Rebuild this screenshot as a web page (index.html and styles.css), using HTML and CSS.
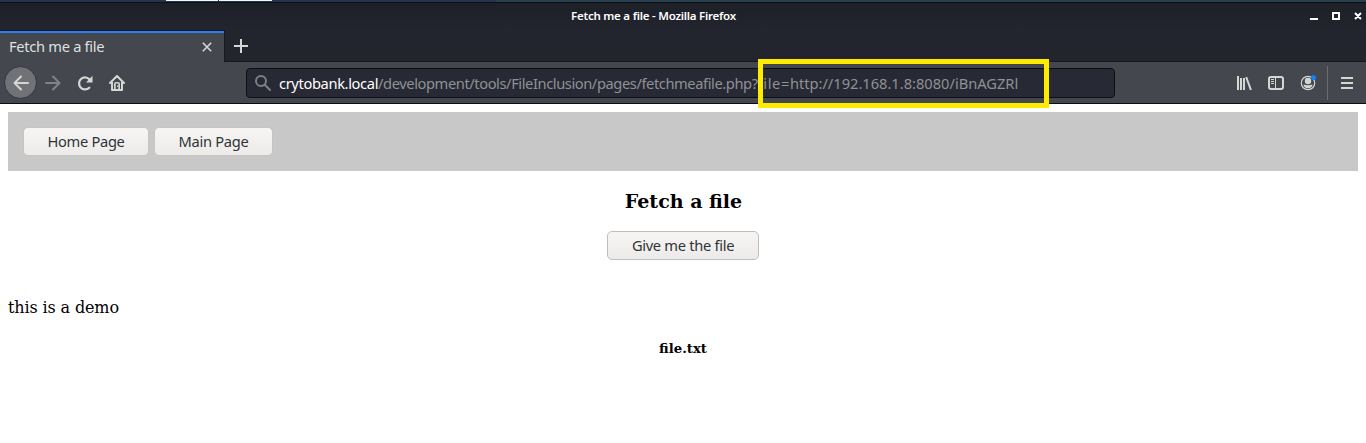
FILE: index.html
```html
<!DOCTYPE html>
<html lang="en">
<head>
<meta charset="utf-8">
<title>Fetch me a file</title>
<link rel="stylesheet" href="styles.css">
</head>
<body>
<div class="desktop"><span class="task"></span><span class="task"></span><span class="panel"></span></div>
<header class="browser">
  <div class="titlebar">
    <span class="window-title">Fetch me a file - Mozilla Firefox</span>
    <svg class="window-controls" width="54" height="12" viewBox="0 0 54 12">
      <path fill="#fff" d="M0 8h8v2H0z"/>
      <path fill="none" stroke="#fff" stroke-width="2" d="M23 3h6v6h-6zM45 3l6 6M51 3l-6 6"/>
    </svg>
  </div>
  <div class="tabs">
    <div class="tab">
      <span class="tab-title">Fetch me a file</span>
      <svg width="10" height="10" viewBox="0 0 10 10"><path class="line" stroke-width="1.6" d="M.8.8l8.4 8.4M9.2.8L.8 9.2"/></svg>
    </div>
    <svg class="new-tab" width="14" height="14" viewBox="0 0 14 14"><path class="line" stroke-width="2" d="M7 0v14M0 7h14"/></svg>
  </div>
  <div class="toolbar">
    <div class="nav">
      <span class="back"><svg width="16" height="16" viewBox="0 0 16 16"><path class="line round" stroke-width="2" d="M15 8H1.5M8 1.500L1.500 8 8 14.500"/></svg></span>
      <svg class="forward" width="16" height="16" viewBox="0 0 16 16"><path class="line round" stroke-width="2" d="M1 8h13.500M8 1.500L14.500 8 8 14.500"/></svg>
      <svg width="16" height="16" viewBox="0 0 16 16"><path class="line round" stroke-width="2.200" d="M12.300 12.700A6 6 0 1 1 13 5"/><path class="solid" d="M15.500.8v6.700H9z"/></svg>
      <svg width="16" height="16" viewBox="0 0 16 16"><path class="line round" stroke-width="2" d="M1 8l7-7 7 7M3 7.500V15h10V7.500"/><path class="solid" fill-rule="evenodd" d="M5 15V9q0-2 2-2h2q2 0 2 2v6zM6.700 8.500V14h2.600V8.500z"/><path class="solid" d="M8 10.500h1.300V12H8z"/></svg>
    </div>
    <div class="address">
      <svg class="search" width="16" height="16" viewBox="0 0 16 16"><circle class="line" cx="6" cy="6" r="5" stroke-width="2"/><path class="line round" stroke-width="2" d="M9.800 9.800L15 15"/></svg>
      <span class="url"><span class="host">crytobank.local</span><span class="path">/development/tools/FileInclusion/pages/fetchmeafile.php?</span><span class="param">file=</span><span class="query">http://192.168.1.8:8080/iBnAGZRl</span></span>
      <span class="highlight"></span>
    </div>
    <div class="actions">
      <svg width="16" height="16" viewBox="0 0 16 16"><path class="line" stroke-width="2" d="M2 1v14M5 3v12M8 3v12M10.200 2l4.700 13"/></svg>
      <svg width="16" height="16" viewBox="0 0 16 16"><rect class="line" x="1" y="2" width="14" height="12" rx="2" stroke-width="2"/><path class="line" stroke-width="1" d="M7.500 2v12M3 4.500h3M3 6.500h3M3 8.500h3"/></svg>
      <svg width="16" height="16" viewBox="0 0 16 16"><circle class="line" cx="8" cy="8" r="6.700" stroke-width="1.200"/><circle class="solid" cx="8" cy="6" r="3.200"/><path class="solid" d="M3.500 9.500q4.500 1.300 9 0-.5 3.800-4.500 3.800t-4.500-3.800z"/><circle cx="13.500" cy="2.500" r="2.500" fill="#0a84ff"/></svg>
    </div>
    <span class="divider"></span>
    <svg class="menu" width="12" height="12" viewBox="0 0 12 12"><path class="line" stroke-width="2" d="M0 1h12M0 6h12M0 11h12"/></svg>
  </div>
</header>
<main class="page">
  <nav class="page-nav"><button class="button home">Home Page</button><button class="button main">Main Page</button></nav>
  <h3 class="heading">Fetch a file</h3>
  <button class="button fetch">Give me the file</button>
  <p class="demo">this is a demo</p>
  <h5 class="filename">file.txt</h5>
</main>
</body>
</html>
```

FILE: styles.css
```css
* { box-sizing: border-box; }
body { margin: 0; background: #fff; overflow: hidden; font-family: "Noto Sans", sans-serif; }
svg { display: block; flex: none; }
.line { fill: none; stroke: #d6d6d3; }
.round { stroke-linecap: round; stroke-linejoin: round; }
.solid { fill: #d6d6d3; }
.desktop { height: 2px; padding-left: 166px; display: flex; gap: 1px; background: #24344f; }
.task { width: 52px; height: 1px; background: #f4f7f8; }
.task + .task { width: 53px; }
.panel { flex: 1; margin-left: 223px; background: #28404e; }
.browser { height: 102px; background: #22252e; border-top: 1px solid #0d1014; border-bottom: 1px solid #0c0c12; }
.titlebar { height: 27px; display: flex; align-items: center; justify-content: flex-end; padding-right: 2px; background: linear-gradient(#1d2027, #22252e); }
.window-title { width: 166px; margin-right: 573px; padding-bottom: 2px; color: #fff; font-size: 11.5px; font-weight: 600; line-height: 24px; white-space: nowrap; letter-spacing: -0.23px; }
.window-controls { margin-top: -1px; }
.tabs { height: 32px; display: flex; border-bottom: 1px solid #16181d; }
.tab { width: 225px; height: 32px; display: flex; align-items: center; justify-content: space-between; padding: 0 12px 0 9px; background: #44474e; border-top: 1px solid #17191e; border-right: 1px solid #17191e; box-shadow: inset 0 2px #2e7cf6; }
.tab-title { padding-bottom: 2px; color: #dfe0df; font-size: 14.67px; line-height: 28px; letter-spacing: -0.3px; }
.new-tab { margin: 9px 0 0 9px; }
.toolbar { height: 41px; display: flex; align-items: center; background: #44474e; }
.nav { width: 246px; display: flex; align-items: center; gap: 16px; padding-left: 4px; }
.back { width: 33px; height: 33px; margin-right: -8px; display: flex; align-items: center; justify-content: center; border-radius: 50%; background: #717278; border: 1px solid #33353b; }
.forward { opacity: .42; }
.address { position: relative; width: 869px; height: 30px; display: flex; align-items: center; gap: 8px; padding-left: 8px; background: #272934; border: 1px solid #0d0e12; border-radius: 4px; }
.search { opacity: .5; }
.url { padding-top: 1px; color: #909195; font-size: 14.67px; line-height: 27px; white-space: nowrap; }
.host { color: #fff; letter-spacing: -0.36px; }
.path { letter-spacing: -0.41px; }
.param { letter-spacing: 0.6px; }
.query { letter-spacing: -0.01px; }
.highlight { position: absolute; left: 511px; top: -10px; width: 291px; height: 49px; border: 5px solid #ffeb00; }
.actions { display: flex; gap: 16px; margin-left: 121px; }
.divider { width: 1px; height: 34px; margin-left: 11px; background: #6b6d72; }
.menu { margin-left: 13px; }
.page { margin: 8px; display: flex; flex-direction: column; align-items: center; color: #000; font-family: "DejaVu Serif", serif; }
.page-nav { align-self: stretch; height: 59px; display: flex; gap: 5px; padding: 15px; background: #c8c8c8; }
.button { height: 29px; padding: 0; color: #2e3436; background: linear-gradient(#f6f5f4, #edebe9); border: 1px solid #c1bdb9; border-radius: 5px; font-family: "Noto Sans", sans-serif; font-size: 14.67px; line-height: 27px; white-space: nowrap; letter-spacing: -0.3px; }
.home { width: 126px; }
.main { width: 119px; }
.page-nav .button { border-color: #c9c4c0; }
.fetch { width: 152px; }
.heading { margin: 19px 0; padding-left: 1px; font-size: 19px; line-height: 22px; }
.demo { align-self: flex-start; margin: 38px 0 0; font-size: 16px; line-height: 20px; letter-spacing: -0.13px; }
.filename { margin: 23px 0 0; font-size: 13.28px; line-height: 16px; }
```
